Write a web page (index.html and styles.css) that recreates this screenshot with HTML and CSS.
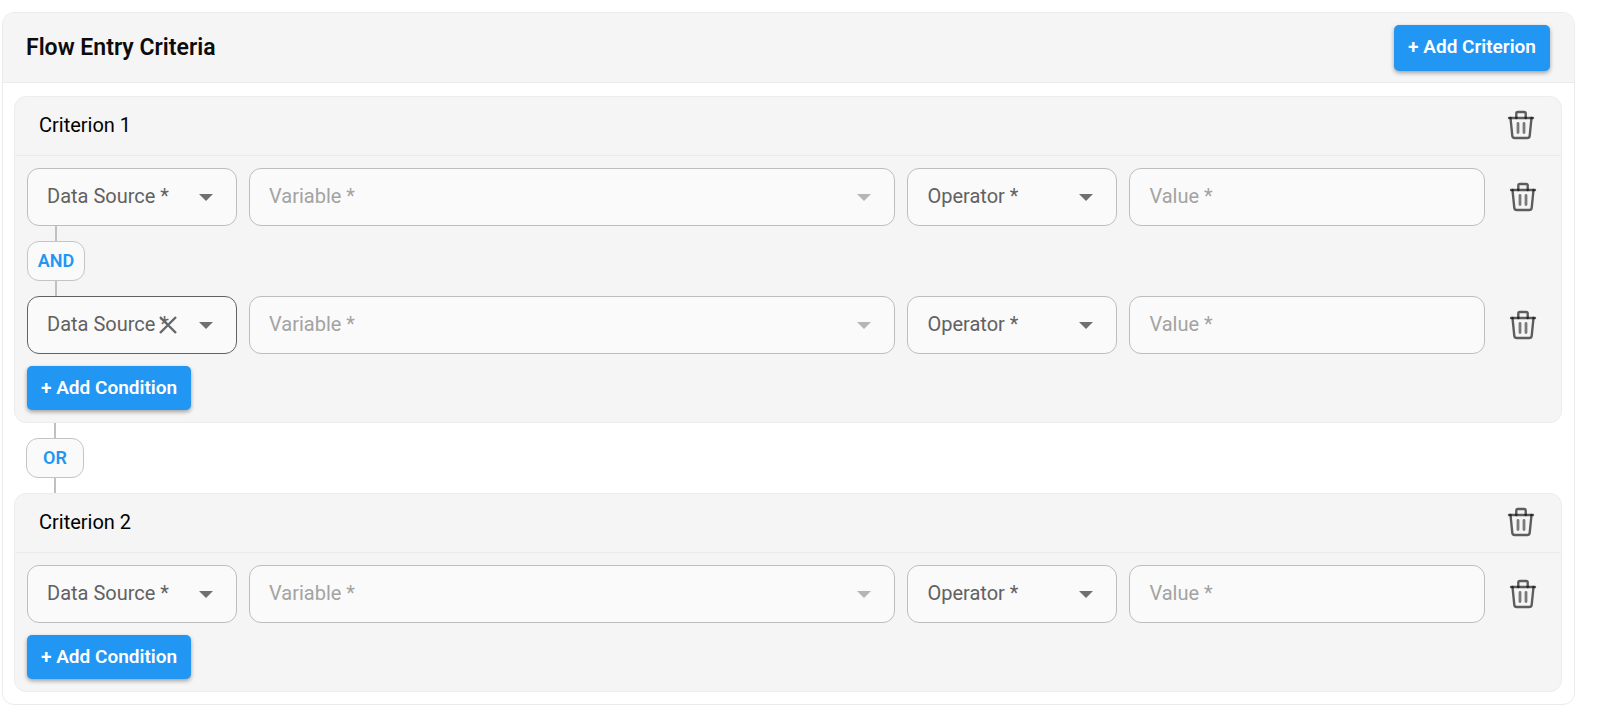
FILE: index.html
```html
<!DOCTYPE html>
<html lang="en">
<head>
    <meta charset="UTF-8">
    <meta name="viewport" content="width=device-width, initial-scale=1.0">
    <title>Flow Entry Criteria</title>
    <link rel="stylesheet" href="styles.css">
</head>
<body>

    <svg class="sprite" aria-hidden="true">
        <symbol id="icon-trash" viewBox="0 0 28 30">
            <g fill="none" stroke="#000" stroke-opacity="0.62" stroke-width="2.400" stroke-linecap="round">
                <path d="M2 8H26"/>
                <path d="M9.300 8V3.500Q9.300 2 10.800 2H17.200Q18.700 2 18.700 3.500V8"/>
                <path d="M3.500 8L5.300 25.800Q5.600 28 7.800 28H20.200Q22.400 28 22.700 25.800L24.500 8"/>
                <path stroke-opacity="0.5" stroke-width="2.800" d="M11 13.500V22.500M17 13.500V22.500"/>
            </g>
        </symbol>
    </svg>

    <main class="panel">
        <header class="panel-header">
            <h1>Flow Entry Criteria</h1>
            <button type="button" class="btn">+ Add Criterion</button>
        </header>

        <div class="panel-body">
            <section class="criterion">
                <header class="criterion-header">
                    <h2>Criterion 1</h2>
                    <button type="button" class="delete" aria-label="Delete criterion 1"><svg><use href="#icon-trash"/></svg></button>
                </header>
                <div class="criterion-body">
                    <div class="condition">
                        <div class="select">
                            <select aria-label="Data Source"><option>Data Source *</option></select>
                        </div>
                        <div class="select disabled">
                            <select aria-label="Variable" disabled><option>Variable *</option></select>
                        </div>
                        <div class="select">
                            <select aria-label="Operator"><option>Operator *</option></select>
                        </div>
                        <input type="text" class="value" aria-label="Value" placeholder="Value *" disabled>
                        <button type="button" class="delete" aria-label="Delete condition"><svg><use href="#icon-trash"/></svg></button>
                    </div>

                    <div class="connector"><span>AND</span></div>

                    <div class="condition">
                        <div class="select active">
                            <select aria-label="Data Source"><option>Data Source *</option></select>
                            <button type="button" class="clear" aria-label="Clear">
                                <svg viewBox="0 0 18 18"><path d="M1 1L17 17M17 1L1 17"/></svg>
                            </button>
                        </div>
                        <div class="select disabled">
                            <select aria-label="Variable" disabled><option>Variable *</option></select>
                        </div>
                        <div class="select">
                            <select aria-label="Operator"><option>Operator *</option></select>
                        </div>
                        <input type="text" class="value" aria-label="Value" placeholder="Value *" disabled>
                        <button type="button" class="delete" aria-label="Delete condition"><svg><use href="#icon-trash"/></svg></button>
                    </div>

                    <button type="button" class="btn add-condition">+ Add Condition</button>
                </div>
            </section>

            <div class="connector connector-or"><span>OR</span></div>

            <section class="criterion">
                <header class="criterion-header">
                    <h2>Criterion 2</h2>
                    <button type="button" class="delete" aria-label="Delete criterion 2"><svg><use href="#icon-trash"/></svg></button>
                </header>
                <div class="criterion-body">
                    <div class="condition">
                        <div class="select">
                            <select aria-label="Data Source"><option>Data Source *</option></select>
                        </div>
                        <div class="select disabled">
                            <select aria-label="Variable" disabled><option>Variable *</option></select>
                        </div>
                        <div class="select">
                            <select aria-label="Operator"><option>Operator *</option></select>
                        </div>
                        <input type="text" class="value" aria-label="Value" placeholder="Value *" disabled>
                        <button type="button" class="delete" aria-label="Delete condition"><svg><use href="#icon-trash"/></svg></button>
                    </div>

                    <button type="button" class="btn add-condition">+ Add Condition</button>
                </div>
            </section>
        </div>
    </main>

</body>
</html>
```
FILE: styles.css
```css
* {
    box-sizing: border-box;
}

body {
    font-family: Roboto, "Liberation Sans", sans-serif;
    margin: 12px 25px 0 2px;
    background: white;
    color: #0c0c0c;
}

button, select, input {
    font-family: inherit;
    margin: 0;
}

.sprite {
    display: none;
}

.panel {
    border: 1px solid #ebebeb;
    border-radius: 12px;
    overflow: hidden;
}

.panel-header {
    display: flex;
    align-items: center;
    justify-content: space-between;
    height: 70px;
    padding: 0 24px 0 23px;
    background: #f5f5f5;
    border-bottom: 1px solid #ebebeb;
}

h1 {
    font-size: 23px;
    font-weight: 600;
    margin: 0;
}

h2 {
    font-size: 20px;
    font-weight: 400;
    margin: 0;
    color: black;
}

.panel-body {
    padding: 13px 12px 12px 11px;
}

.btn {
    height: 44px;
    padding: 0 14px 2px;
    border: none;
    border-radius: 5px;
    background: #2196f3;
    color: white;
    font-size: 19px;
    font-weight: 600;
    box-shadow: 0 2px 4px rgba(0, 0, 0, 0.35);
    cursor: pointer;
}

.panel-header .btn {
    height: 46px;
}

.criterion {
    background: #f5f5f5;
    border: 1px solid #ececec;
    border-radius: 12px;
}

.criterion-header {
    display: flex;
    align-items: center;
    justify-content: space-between;
    height: 59px;
    padding: 0 14px 2px 24px;
    border-bottom: 1px solid #ebebeb;
}

.criterion-body {
    padding: 12px;
}

.condition {
    display: grid;
    grid-template-columns: 210px 20fr 210px 11fr 52px;
    column-gap: 12px;
    align-items: center;
}

.select {
    position: relative;
}

.select select,
.value {
    display: block;
    width: 100%;
    height: 58px;
    padding: 0 19px 2px;
    border: 1px solid #bdbdbd;
    border-radius: 12px;
    background: #fafafa;
    color: #616161;
    font-size: 20px;
    appearance: none;
    opacity: 1;
}

/* drop-down arrow */
.select::after {
    content: "";
    position: absolute;
    top: 26px;
    right: 24px;
    border: 7px solid transparent;
    border-top-color: #707070;
    border-bottom: none;
    pointer-events: none;
}

.select.disabled select,
.value::placeholder {
    color: #a3a3a3;
}

.select.disabled::after {
    border-top-color: #b5b5b5;
}

.select.active select {
    border-color: #616161;
}

.clear {
    position: absolute;
    top: 20px;
    right: 60px;
    width: 18px;
    height: 18px;
    padding: 0;
    border: none;
    background: none;
}

.clear svg {
    display: block;
    fill: none;
    stroke: #666;
    stroke-width: 2.4;
}

.delete {
    width: 52px;
    height: 52px;
    padding: 0;
    border: none;
    background: none;
    cursor: pointer;
}

.delete svg {
    display: block;
    width: 28px;
    height: 30px;
    margin: auto;
}

.connector {
    display: flex;
    flex-direction: column;
    align-items: center;
    width: 58px;
}

.connector::before,
.connector::after {
    content: "";
    width: 2px;
    height: 15px;
    background: #c0c0c0;
}

.connector span {
    width: 100%;
    height: 40px;
    line-height: 37px;
    text-align: center;
    border: 1px solid #c4c4c4;
    border-radius: 12px;
    background: #fafafa;
    color: #2196f3;
    font-size: 18px;
    font-weight: 600;
}

.connector-or {
    margin-left: 12px;
}

.add-condition {
    display: block;
    margin-top: 12px;
}
```
